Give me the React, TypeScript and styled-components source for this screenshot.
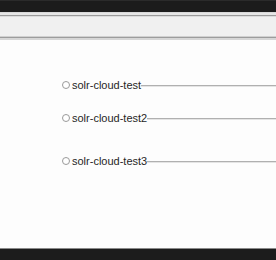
import React from 'react'
import styled, { createGlobalStyle } from 'styled-components'

const GlobalStyle = createGlobalStyle`
  html, body {
    margin: 0;
    padding: 0;
    background: #fdfdfd;
  }
`

const Screen = styled.div`
  width: 276px;
  height: 260px;
  display: flex;
  flex-direction: column;
  overflow: hidden;
  font-family: "Liberation Sans", Arial, sans-serif;
`

const TitleBar = styled.div`
  height: 11px;
  background: #1c1c1c;
  border-top: 1px solid #2b2b2b;
`

const Toolbar = styled.div`
  height: 19px;
  background: #f0f0f0;
  border-top: 1px solid #d8d8d8;
  box-shadow: inset 0 2px 0 #e6e6e6, inset 0 3px 0 #9a9a9a, inset 0 4px 0 #dcdcdc;
  padding-top: 4px;
  box-sizing: content-box;
  border-bottom: 1px solid #d0d0d0;
`

const ToolbarEdge = styled.div`
  height: 1px;
  background: #9c9c9c;
  border-bottom: 2px solid #d6d6d6;
`

const Content = styled.div`
  flex: 1;
  background: #fdfdfd;
  padding: 38px 0 0 62px;
  display: flex;
  flex-direction: column;
`

const Row = styled.div<{ $gap: number }>`
  height: 14px;
  margin-top: ${p => p.$gap}px;
  display: flex;
  align-items: center;
`

const Radio = styled.span`
  width: 6px;
  height: 6px;
  border-radius: 50%;
  border: 1px solid #9a9a9a;
  background: #fff;
  margin-right: 2px;
  flex: none;
`

const Label = styled.span`
  font-size: 11px;
  color: #262626;
  white-space: nowrap;
  line-height: 14px;
`

const Rule = styled.span`
  flex: 1;
  height: 1px;
  background: #b0b0b0;
  border-bottom: 1px solid #e4e4e4;
  margin-top: 1px;
`

const Footer = styled.div`
  height: 11px;
  background: #1c1c1c;
  border-top: 1px solid #8a8a8a;
`

const clouds = [
  { name: 'solr-cloud-test', gap: 0 },
  { name: 'solr-cloud-test2', gap: 19 },
  { name: 'solr-cloud-test3', gap: 29 },
]

export default function App(): React.ReactElement {
  return (
    <Screen>
      <GlobalStyle />
      <TitleBar />
      <Toolbar />
      <ToolbarEdge />
      <Content>
        {clouds.map(c => (
          <Row key={c.name} $gap={c.gap}>
            <Radio />
            <Label>{c.name}</Label>
            <Rule />
          </Row>
        ))}
      </Content>
      <Footer />
    </Screen>
  )
}
